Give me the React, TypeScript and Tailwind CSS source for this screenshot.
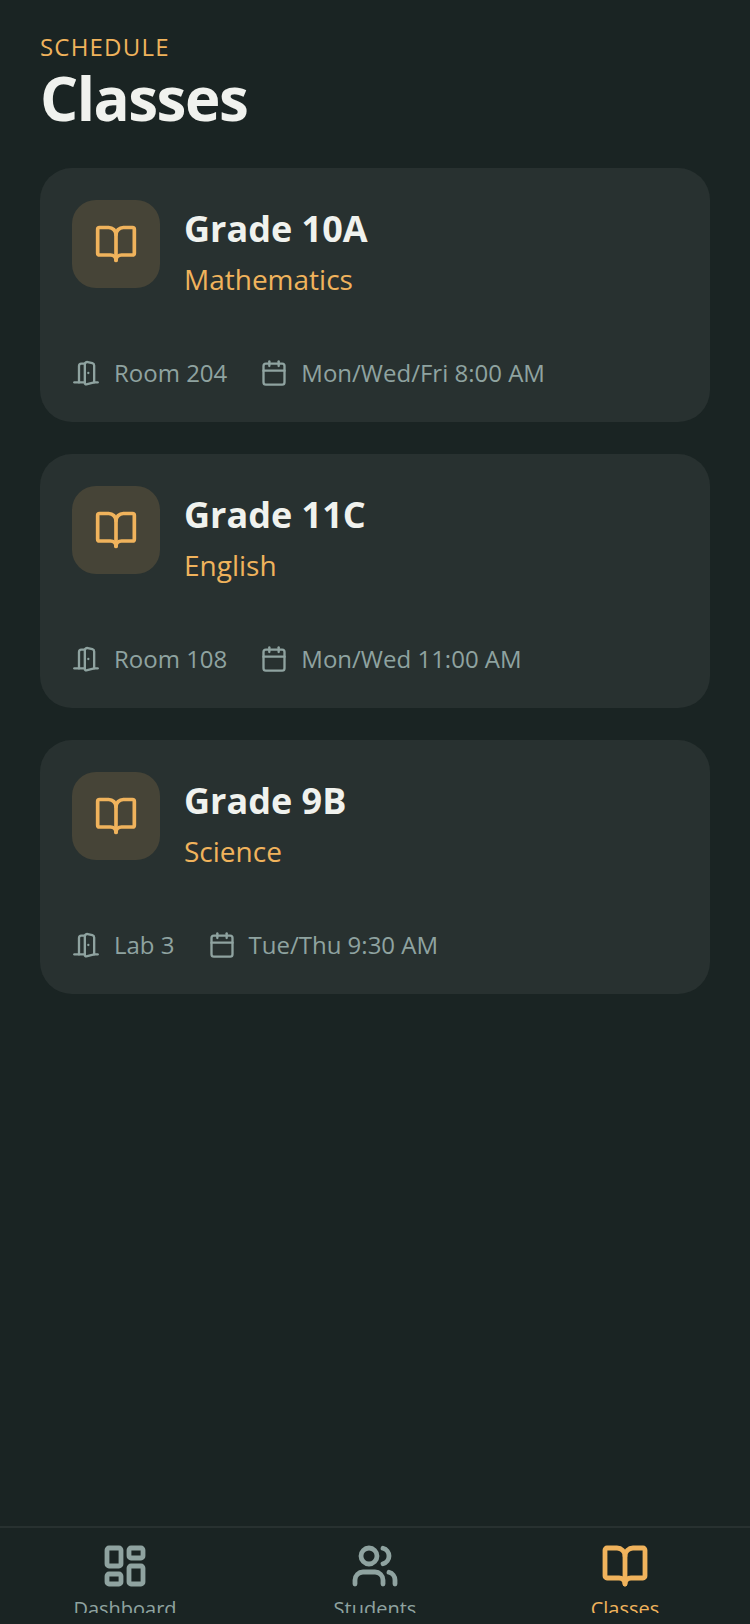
import { BookOpen, Calendar, DoorOpen, LayoutDashboard, Users } from "lucide-react";

const classes = [
  { name: "Grade 10A", subject: "Mathematics", room: "Room 204", time: "Mon/Wed/Fri 8:00 AM" },
  { name: "Grade 11C", subject: "English", room: "Room 108", time: "Mon/Wed 11:00 AM" },
  { name: "Grade 9B", subject: "Science", room: "Lab 3", time: "Tue/Thu 9:30 AM" },
];

const tabs = [
  { label: "Dashboard", Icon: LayoutDashboard, active: false },
  { label: "Students", Icon: Users, active: false },
  { label: "Classes", Icon: BookOpen, active: true },
];

export default function App() {
  return (
    <div className="flex h-[1624px] flex-col overflow-hidden bg-[#1a2423] font-['Open_Sans',sans-serif]">
      <div className="flex-1 px-10 pt-[31px]">
        <p className="text-[24px] leading-[32px] tracking-[1.2px] text-[#f0b35c]">SCHEDULE</p>
        <h1 className="mt-[-1px] text-[60px] leading-[72px] font-bold tracking-[-1.5px] text-[#f0f2ee]">Classes</h1>
        <div className="mt-[34px] flex flex-col gap-8">
          {classes.map((c) => (
            <div key={c.name} className="rounded-[32px] bg-[#283130] p-8">
              <div className="flex gap-6">
                <div className="flex size-[88px] items-center justify-center rounded-[24px] bg-[#464437]">
                  <BookOpen size={44} strokeWidth={2} className="text-[#f0b35c]" />
                </div>
                <div>
                  <h2 className="mt-[2px] text-[36px] leading-[54px] font-bold text-[#f0f2ee]">{c.name}</h2>
                  <p className="mt-[2px] text-[28px] leading-[42px] text-[#f0b35c]">{c.subject}</p>
                </div>
              </div>
              <div className="mt-[55px] mb-[-1px] flex items-center gap-[33px] text-[24px] leading-[36px] text-[#8fa3a0]">
                <div className="flex items-center gap-[14px]">
                  <DoorOpen size={28} strokeWidth={2} />
                  <span>{c.room}</span>
                </div>
                <div className="flex items-center gap-[13px]">
                  <Calendar size={28} strokeWidth={2} />
                  <span>{c.time}</span>
                </div>
              </div>
            </div>
          ))}
        </div>
      </div>
      <div className="h-[98px] border-t-2 border-[#283130]">
        <div className="grid h-[85px] grid-cols-3 overflow-hidden pt-[14px]">
          {tabs.map(({ label, Icon, active }) => (
            <div key={label} className={"flex flex-col items-center " + (active ? "text-[#f0b35c]" : "text-[#8fa3a0]")}>
              <Icon size={48} strokeWidth={2.4} />
              <span className="mt-[4px] text-[20px] leading-[30px]">{label}</span>
            </div>
          ))}
        </div>
      </div>
    </div>
  );
}
